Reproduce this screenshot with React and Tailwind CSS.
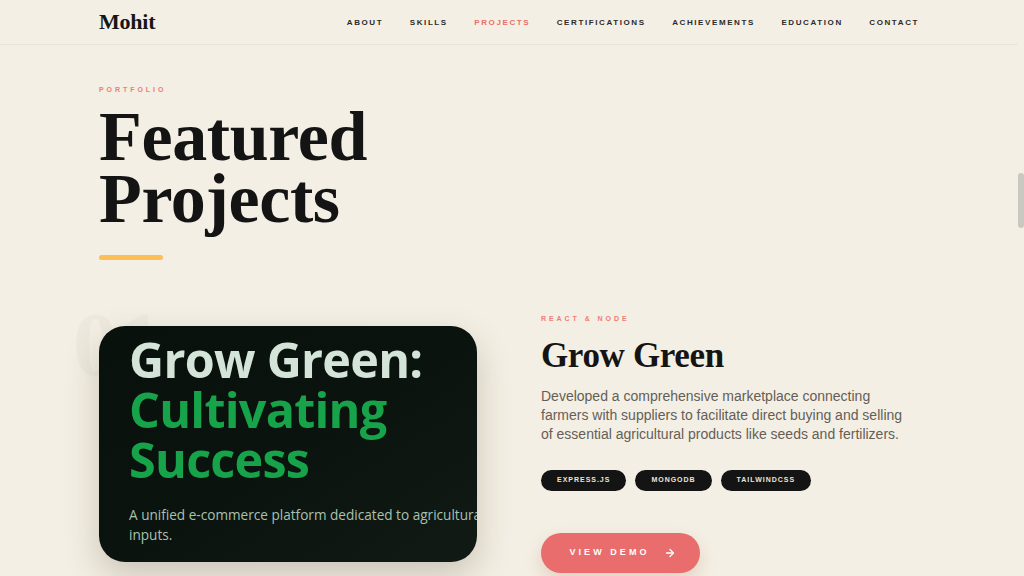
import { ArrowRight } from 'lucide-react'

const navLinks = ['About', 'Skills', 'Projects', 'Certifications', 'Achievements', 'Education', 'Contact']
const tags = ['Express.js', 'MongoDB', 'TailwindCSS']

const serif = "font-['Liberation_Serif',serif]"
const sans = "font-['Liberation_Sans',Arial,sans-serif]"

export default function App() {
  return (
    <div className={`flex h-[576px] w-[1024px] overflow-hidden bg-[#f4efe4] ${sans}`}>
      <main className="flex-1">
        {/* Top nav */}
        <header className="h-[45px] border-b border-[#ebe5d8]">
          <div className="mx-auto flex h-full w-[820px] items-center justify-between">
            <span className={`${serif} pb-[2px] text-[22px] font-bold tracking-[-0.01em] text-[#161616]`}>Mohit</span>
            <nav className="flex gap-[26.5px] pt-[1px]">
              {navLinks.map((l) => (
                <span
                  key={l}
                  className={`text-[8px] font-bold uppercase tracking-[0.2em] ${
                    l === 'Projects' ? 'text-[#e8706c]' : 'text-[#2b2b2b]'
                  }`}
                >
                  {l}
                </span>
              ))}
            </nav>
          </div>
        </header>

        <div className="mx-auto w-[820px]">
          {/* Section title */}
          <p className="mt-[41px] text-[7px] font-bold uppercase leading-[8px] tracking-[0.42em] text-[#ec7e78]">Portfolio</p>
          <h1 className={`${serif} mt-[12px] text-[70px] font-bold leading-[62px] tracking-[-0.005em] text-[#141414]`}>
            Featured
            <br />
            Projects
          </h1>
          <div className="mt-[25px] h-[5px] w-[64px] rounded-full bg-[#fdbd57]" />

          {/* Project row */}
          <div className="mt-[55px] flex items-center gap-[64px]">
            <div className="relative shrink-0">
              <span className={`${serif} absolute -left-[26px] -top-[26px] text-[90px] font-bold leading-none text-[#eee9de]`}>01</span>
              <div className="relative h-[236px] w-[378px] overflow-hidden rounded-[26px] bg-gradient-to-br from-[#09110c] via-[#0b130e] to-[#111a15] pl-[30px] shadow-[0_14px_34px_rgba(60,50,30,0.22)]">
                <div className="mt-[8px] font-['Open_Sans',sans-serif] text-[48.5px] font-bold leading-[50px] tracking-[-0.015em]">
                  <p className="text-[#d5e4d8]">Grow Green:</p>
                  <p className="text-[#16a34a]">Cultivating</p>
                  <p className="text-[#16a34a]">Success</p>
                </div>
                <p className="mt-[21px] whitespace-nowrap font-['Open_Sans',sans-serif] text-[13.6px] leading-[20px] text-[#a7c2b0]">
                  A unified e-commerce platform dedicated to agricultural
                  <br />
                  inputs.
                </p>
              </div>
            </div>

            <div className="w-[380px]">
              <p className="text-[7px] font-bold uppercase leading-[8px] tracking-[0.42em] text-[#ec7e78]">React &amp; Node</p>
              <h2 className={`${serif} mt-[13px] text-[35px] font-bold leading-[40px] tracking-[-0.01em] text-[#141414]`}>Grow Green</h2>
              <p className="mt-[11px] w-[372px] text-[14px] leading-[19px] text-[#645e57]">
                Developed a comprehensive marketplace connecting farmers with suppliers to facilitate direct buying and selling of essential agricultural products like seeds and fertilizers.
              </p>
              <div className="mt-[26px] flex gap-[9px]">
                {tags.map((t) => (
                  <span
                    key={t}
                    className="flex h-[21px] items-center rounded-full bg-[#141414] px-[16px] text-[7px] font-bold uppercase tracking-[0.14em] text-[#ece6da]"
                  >
                    {t}
                  </span>
                ))}
              </div>
              <button className="mt-[42px] flex h-[40px] w-[159px] items-center justify-center gap-[14px] rounded-full bg-[#e86d6c] pl-[4px] text-[9px] font-bold uppercase tracking-[0.34em] text-white shadow-[0_8px_18px_rgba(150,90,60,0.2)]">
                View Demo
                <ArrowRight size={12} strokeWidth={2.6} />
              </button>
            </div>
          </div>
        </div>
      </main>

      {/* Scrollbar */}
      <aside className="w-[6px] shrink-0">
        <div className="mt-[173px] h-[55px] rounded-full bg-[#c9c9c1]" />
      </aside>
    </div>
  )
}
